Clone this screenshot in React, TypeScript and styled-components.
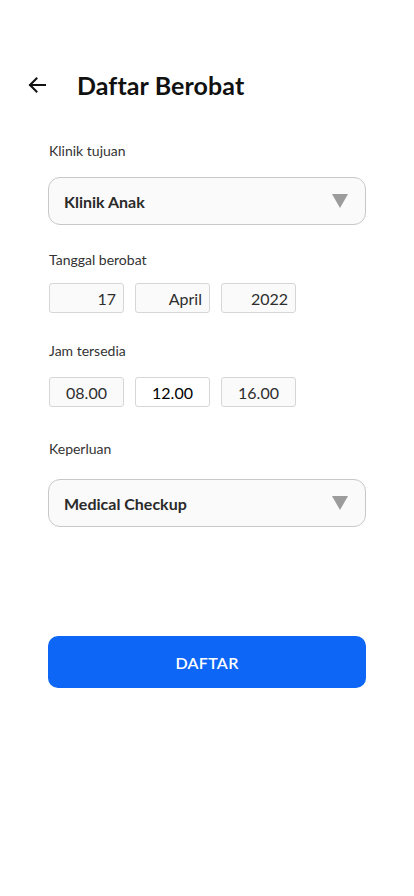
import styled, {createGlobalStyle} from 'styled-components';

/* -------------------------------------------------------------------------- */
/*                                   Styles                                   */
/* -------------------------------------------------------------------------- */
const GlobalStyle = createGlobalStyle`
  html, body {
    margin: 0;
    padding: 0;
    background: #ffffff;
  }

  body {
    font-family: Lato, 'Noto Sans', sans-serif;
    color: #222222;
  }
`;

const Page = styled.div`
  width: 414px;
  min-height: 896px;
  box-sizing: border-box;
  padding: 70px 48px 0 48px;
  display: flex;
  flex-direction: column;
`;

const Header = styled.header`
  display: flex;
  align-items: center;
  margin-left: -22px;
  height: 30px;
  margin-bottom: 42px;
`;

const BackButton = styled.button`
  width: 22px;
  height: 22px;
  padding: 0;
  border: none;
  background: none;
  display: flex;
  align-items: center;
  justify-content: center;
  cursor: pointer;
  margin-right: 29px;
`;

const Title = styled.h1`
  margin: 0;
  font-size: 25px;
  font-weight: 700;
  color: #111111;
  letter-spacing: 0.1px;
`;

const Field = styled.div<{$gap?: number}>`
  display: flex;
  flex-direction: column;
  margin-bottom: ${({$gap}) => $gap ?? 0}px;
`;

const Label = styled.label<{$space?: number}>`
  font-size: 14px;
  color: #333333;
  line-height: 18px;
  margin-bottom: ${({$space}) => $space ?? 17}px;
  margin-left: 1px;
`;

const Select = styled.div`
  height: 48px;
  box-sizing: border-box;
  border: 1px solid #c8c8c8;
  border-radius: 12px;
  background: #fafafa;
  display: flex;
  align-items: center;
  justify-content: space-between;
  padding: 0 17px 0 15px;
  font-size: 16px;
  font-weight: 700;
  color: #2a2a2a;
`;

const Caret = styled.span`
  width: 0;
  height: 0;
  border-left: 8px solid transparent;
  border-right: 8px solid transparent;
  border-top: 14px solid #9c9c9c;
`;

const BoxRow = styled.div`
  display: flex;
  gap: 11px;
  padding-left: 1px;
`;

const Box = styled.div<{$align?: 'right' | 'center'; $active?: boolean}>`
  width: 75px;
  height: 30px;
  box-sizing: border-box;
  border: 1px solid #d6d6d6;
  border-radius: 3px;
  background: ${({$active}) => ($active ? '#ffffff' : '#fafafa')};
  display: flex;
  align-items: center;
  justify-content: ${({$align}) => ($align === 'center' ? 'center' : 'flex-end')};
  padding: 0 7px;
  font-size: 16px;
  color: ${({$active}) => ($active ? '#000000' : '#2e2e2e')};
`;

const SubmitButton = styled.button`
  margin-top: 109px;
  height: 52px;
  border: none;
  border-radius: 10px;
  background: #0d66f5;
  color: #ffffff;
  font-family: Lato, 'Noto Sans', sans-serif;
  font-size: 16px;
  font-weight: 600;
  letter-spacing: 0.3px;
  cursor: pointer;
`;

/* -------------------------------------------------------------------------- */
/*                                    Page                                    */
/* -------------------------------------------------------------------------- */
const dates = ['17', 'April', '2022'];
const hours = ['08.00', '12.00', '16.00'];

const App = () => (
  <>
    <GlobalStyle />
    <Page>
      <Header>
        <BackButton aria-label="Kembali">
          <svg width="18" height="16" viewBox="0 0 18 16" fill="none">
            <path d="M17 8H2M8.5 1.5L2 8l6.5 6.5" stroke="#111" strokeWidth="2" strokeLinecap="square" />
          </svg>
        </BackButton>
        <Title>Daftar Berobat</Title>
      </Header>

      <Field $gap={26}>
        <Label>Klinik tujuan</Label>
        <Select>
          <span>Klinik Anak</span>
          <Caret />
        </Select>
      </Field>

      <Field $gap={29}>
        <Label $space={14}>Tanggal berobat</Label>
        <BoxRow>
          {dates.map(d => (
            <Box key={d}>{d}</Box>
          ))}
        </BoxRow>
      </Field>

      <Field $gap={33}>
        <Label>Jam tersedia</Label>
        <BoxRow>
          {hours.map(h => (
            <Box key={h} $align="center" $active={h === '12.00'}>
              {h}
            </Box>
          ))}
        </BoxRow>
      </Field>

      <Field>
        <Label $space={21}>Keperluan</Label>
        <Select>
          <span>Medical Checkup</span>
          <Caret />
        </Select>
      </Field>

      <SubmitButton>DAFTAR</SubmitButton>
    </Page>
  </>
);

export default App;
